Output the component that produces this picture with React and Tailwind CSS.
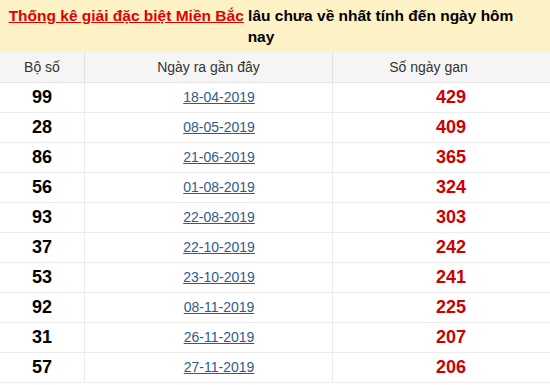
const rows = [
  ["99", "18-04-2019", "429"],
  ["28", "08-05-2019", "409"],
  ["86", "21-06-2019", "365"],
  ["56", "01-08-2019", "324"],
  ["93", "22-08-2019", "303"],
  ["37", "22-10-2019", "242"],
  ["53", "23-10-2019", "241"],
  ["92", "08-11-2019", "225"],
  ["31", "26-11-2019", "207"],
  ["57", "27-11-2019", "206"],
];

const App = () => {
  return (
    <div className="w-[550px] h-[385px] bg-white overflow-hidden font-['Liberation_Sans',Arial,sans-serif]">
      {/* title band */}
      <div className="h-[52px] bg-[#fdf2c6] pt-[5px]">
        <div className="w-[522px] text-center text-[15.5px] font-bold leading-[21px] text-black">
          <a href="#" className="text-[#e00000] underline">Thống kê giải đặc biệt Miền Bắc</a> lâu chưa về nhất tính đến ngày hôm nay
        </div>
      </div>

      {/* table header */}
      <div className="grid grid-cols-[85px_248px_217px] h-[31px] bg-[#f5f5f5] border-b border-[#e6e6e6] text-[14px] text-[#333] items-center">
        <div className="h-full flex items-center justify-center border-r border-[#e2e2e2]">Bộ số</div>
        <div className="h-full flex items-center justify-center border-r border-[#e2e2e2]">Ngày ra gần đây</div>
        <div className="h-full flex items-center justify-center pr-[26px]">Số ngày gan</div>
      </div>

      {rows.map(([num, date, days]) => (
        <div key={num} className="grid grid-cols-[85px_248px_217px] h-[30px] border-b border-[#ececec]">
          <div className="flex items-center justify-center border-r border-[#ececec] text-[18px] font-bold text-black">{num}</div>
          <div className="flex items-center justify-center pl-[21px] border-r border-[#ececec]">
            <a href="#" className="text-[14px] text-[#2f5b8c] underline">{date}</a>
          </div>
          <div className="flex items-center justify-center pl-[19px] text-[18px] font-bold text-[#cc0000]">{days}</div>
        </div>
      ))}
    </div>
  );
};

export default App;
